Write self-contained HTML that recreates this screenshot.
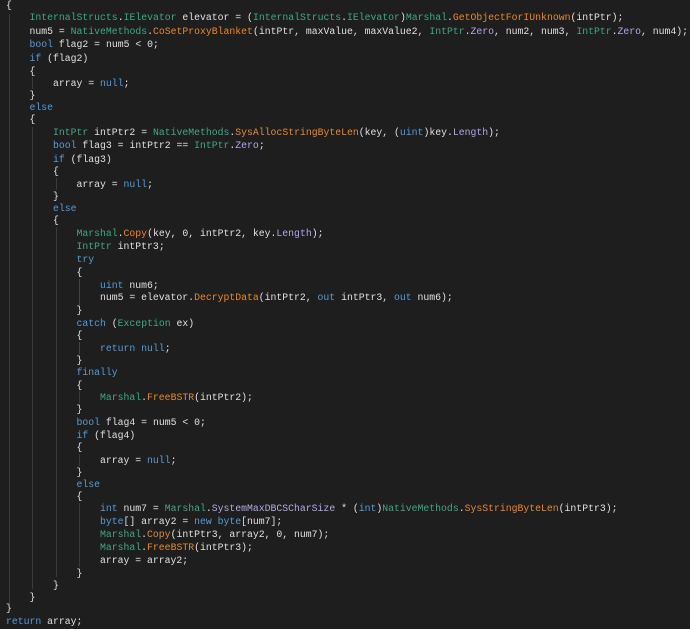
<!DOCTYPE html>
<html><head><meta charset="utf-8"><style>
html,body{margin:0;padding:0;background:#1e1e1e;width:690px;height:629px;overflow:hidden}
.l{position:absolute;white-space:pre;font-family:"Liberation Mono",monospace;font-size:9.8px;line-height:12px;color:#e0e0e0;height:12px}
.k{color:#569cd6}.t{color:#3fa882}.m{color:#e8892c}.p{color:#b4a8e6}
.g{position:absolute;width:1px;background:#3a3a3a}
</style></head><body>
<div class="g" style="left:9px;top:14px;height:590px"></div>
<div class="g" style="left:32px;top:127px;height:462px"></div>
<div class="g" style="left:56px;top:227px;height:350px"></div>
<div class="g" style="left:79px;top:279px;height:26px;background:#5a3a3a"></div>
<div class="g" style="left:79px;top:342px;height:12px;background:#5a3a3a"></div>
<div class="g" style="left:79px;top:391px;height:12px"></div>
<div class="g" style="left:79px;top:454px;height:12px"></div>
<div class="g" style="left:79px;top:503px;height:64px"></div>
<div class="g" style="left:32px;top:77px;height:12px"></div>
<div class="g" style="left:56px;top:178px;height:12px"></div>
<div class="l" style="left:6px;top:0px">{</div>
<div class="l" style="left:29.5px;top:11.5px"><span class="t">InternalStructs</span>.<span class="t">IElevator</span> elevator = (<span class="t">InternalStructs</span>.<span class="t">IElevator</span>)<span class="t">Marshal</span>.<span class="m">GetObjectForIUnknown</span>(intPtr);</div>
<div class="l" style="left:29.5px;top:25.5px">num5 = <span class="t">NativeMethods</span>.<span class="m">CoSetProxyBlanket</span>(intPtr, maxValue, maxValue2, <span class="t">IntPtr</span>.<span class="p">Zero</span>, num2, num3, <span class="t">IntPtr</span>.<span class="p">Zero</span>, num4);</div>
<div class="l" style="left:29.5px;top:39px"><span class="k">bool</span> flag2 = num5 &lt; 0;</div>
<div class="l" style="left:29.5px;top:53px"><span class="k">if</span> (flag2)</div>
<div class="l" style="left:29.5px;top:65.5px">{</div>
<div class="l" style="left:53px;top:77.5px">array = <span class="k">null</span>;</div>
<div class="l" style="left:29.5px;top:90px">}</div>
<div class="l" style="left:29.5px;top:101.5px"><span class="k">else</span></div>
<div class="l" style="left:29.5px;top:114px">{</div>
<div class="l" style="left:53px;top:127px"><span class="t">IntPtr</span> intPtr2 = <span class="t">NativeMethods</span>.<span class="m">SysAllocStringByteLen</span>(key, (<span class="k">uint</span>)key.<span class="p">Length</span>);</div>
<div class="l" style="left:53px;top:140px"><span class="k">bool</span> flag3 = intPtr2 == <span class="t">IntPtr</span>.<span class="p">Zero</span>;</div>
<div class="l" style="left:53px;top:153.5px"><span class="k">if</span> (flag3)</div>
<div class="l" style="left:53px;top:166px">{</div>
<div class="l" style="left:76.5px;top:178.5px">array = <span class="k">null</span>;</div>
<div class="l" style="left:53px;top:191px">}</div>
<div class="l" style="left:53px;top:203px"><span class="k">else</span></div>
<div class="l" style="left:53px;top:215px">{</div>
<div class="l" style="left:76.5px;top:228px"><span class="t">Marshal</span>.<span class="m">Copy</span>(key, 0, intPtr2, key.<span class="p">Length</span>);</div>
<div class="l" style="left:76.5px;top:240.5px"><span class="t">IntPtr</span> intPtr3;</div>
<div class="l" style="left:76.5px;top:254px"><span class="k">try</span></div>
<div class="l" style="left:76.5px;top:267px">{</div>
<div class="l" style="left:100px;top:279.5px"><span class="k">uint</span> num6;</div>
<div class="l" style="left:100px;top:292px">num5 = elevator.<span class="m">DecryptData</span>(intPtr2, <span class="k">out</span> intPtr3, <span class="k">out</span> num6);</div>
<div class="l" style="left:76.5px;top:305px">}</div>
<div class="l" style="left:76.5px;top:318px"><span class="k">catch</span> (<span class="t">Exception</span> ex)</div>
<div class="l" style="left:76.5px;top:330px">{</div>
<div class="l" style="left:100px;top:342.5px"><span class="k">return</span> <span class="k">null</span>;</div>
<div class="l" style="left:76.5px;top:355px">}</div>
<div class="l" style="left:76.5px;top:367px"><span class="k">finally</span></div>
<div class="l" style="left:76.5px;top:379.5px">{</div>
<div class="l" style="left:100px;top:391.5px"><span class="t">Marshal</span>.<span class="m">FreeBSTR</span>(intPtr2);</div>
<div class="l" style="left:76.5px;top:404px">}</div>
<div class="l" style="left:76.5px;top:416.5px"><span class="k">bool</span> flag4 = num5 &lt; 0;</div>
<div class="l" style="left:76.5px;top:429.5px"><span class="k">if</span> (flag4)</div>
<div class="l" style="left:76.5px;top:442px">{</div>
<div class="l" style="left:100px;top:454.5px">array = <span class="k">null</span>;</div>
<div class="l" style="left:76.5px;top:466.5px">}</div>
<div class="l" style="left:76.5px;top:479px"><span class="k">else</span></div>
<div class="l" style="left:76.5px;top:491px">{</div>
<div class="l" style="left:100px;top:503px"><span class="k">int</span> num7 = <span class="t">Marshal</span>.<span class="p">SystemMaxDBCSCharSize</span> * (<span class="k">int</span>)<span class="t">NativeMethods</span>.<span class="m">SysStringByteLen</span>(intPtr3);</div>
<div class="l" style="left:100px;top:516px"><span class="k">byte</span>[] array2 = <span class="k">new</span> <span class="k">byte</span>[num7];</div>
<div class="l" style="left:100px;top:529px"><span class="t">Marshal</span>.<span class="m">Copy</span>(intPtr3, array2, 0, num7);</div>
<div class="l" style="left:100px;top:542px"><span class="t">Marshal</span>.<span class="m">FreeBSTR</span>(intPtr3);</div>
<div class="l" style="left:100px;top:555px">array = array2;</div>
<div class="l" style="left:76.5px;top:568px">}</div>
<div class="l" style="left:53px;top:580px">}</div>
<div class="l" style="left:29.5px;top:592px">}</div>
<div class="l" style="left:6px;top:603px">}</div>
<div class="l" style="left:6px;top:616px"><span class="k">return</span> array;</div>
</body></html>
